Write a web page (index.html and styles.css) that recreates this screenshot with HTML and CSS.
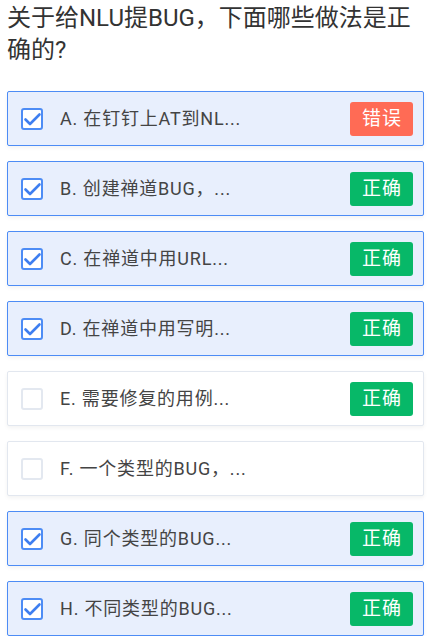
FILE: index.html
```html
<!DOCTYPE html>
<html lang="zh-CN">
<head>
<meta charset="utf-8">
<link rel="stylesheet" href="styles.css">
</head>
<body>
<div class="page">
  <h1 class="question">关于给NLU提BUG，下面哪些做法是正确的?</h1>
  <ul class="options">
    <li class="option checked">
      <span class="box"><svg viewBox="0 0 22 22" width="22" height="22"><path d="M4.5 11.5 L9 16 L18.5 6.5" fill="none" stroke="#3f7ff0" stroke-width="2.6" stroke-linecap="round" stroke-linejoin="round"/></svg></span>
      <span class="label">A. 在钉钉上AT到NL...</span>
      <span class="badge wrong">错误</span>
    </li>
    <li class="option checked">
      <span class="box"><svg viewBox="0 0 22 22" width="22" height="22"><path d="M4.5 11.5 L9 16 L18.5 6.5" fill="none" stroke="#3f7ff0" stroke-width="2.6" stroke-linecap="round" stroke-linejoin="round"/></svg></span>
      <span class="label">B. 创建禅道BUG，...</span>
      <span class="badge right">正确</span>
    </li>
    <li class="option checked">
      <span class="box"><svg viewBox="0 0 22 22" width="22" height="22"><path d="M4.5 11.5 L9 16 L18.5 6.5" fill="none" stroke="#3f7ff0" stroke-width="2.6" stroke-linecap="round" stroke-linejoin="round"/></svg></span>
      <span class="label">C. 在禅道中用URL...</span>
      <span class="badge right">正确</span>
    </li>
    <li class="option checked">
      <span class="box"><svg viewBox="0 0 22 22" width="22" height="22"><path d="M4.5 11.5 L9 16 L18.5 6.5" fill="none" stroke="#3f7ff0" stroke-width="2.6" stroke-linecap="round" stroke-linejoin="round"/></svg></span>
      <span class="label">D. 在禅道中用写明...</span>
      <span class="badge right">正确</span>
    </li>
    <li class="option">
      <span class="box"></span>
      <span class="label">E. 需要修复的用例...</span>
      <span class="badge right">正确</span>
    </li>
    <li class="option">
      <span class="box"></span>
      <span class="label">F. 一个类型的BUG，...</span>
    </li>
    <li class="option checked">
      <span class="box"><svg viewBox="0 0 22 22" width="22" height="22"><path d="M4.5 11.5 L9 16 L18.5 6.5" fill="none" stroke="#3f7ff0" stroke-width="2.6" stroke-linecap="round" stroke-linejoin="round"/></svg></span>
      <span class="label">G. 同个类型的BUG...</span>
      <span class="badge right">正确</span>
    </li>
    <li class="option checked">
      <span class="box"><svg viewBox="0 0 22 22" width="22" height="22"><path d="M4.5 11.5 L9 16 L18.5 6.5" fill="none" stroke="#3f7ff0" stroke-width="2.6" stroke-linecap="round" stroke-linejoin="round"/></svg></span>
      <span class="label">H. 不同类型的BUG...</span>
      <span class="badge right">正确</span>
    </li>
  </ul>
</div>
</body>
</html>
```

FILE: styles.css
```css
html, body {
  margin: 0;
  padding: 0;
  background: #ffffff;
}
body {
  font-family: Roboto, "Noto Sans CJK SC", sans-serif;
  color: #333333;
}
.page {
  padding: 2px 4px 0 7px;
}
.question {
  margin: 0;
  font-size: 24px;
  font-weight: 400;
  line-height: 32px;
  color: #333333;
}
.options {
  list-style: none;
  margin: 25px 0 0;
  padding: 0;
  display: flex;
  flex-direction: column;
  gap: 15px;
}
.option {
  box-sizing: border-box;
  height: 55px;
  display: flex;
  align-items: center;
  padding: 0 10px 0 13px;
  border: 1px solid #e2e7ef;
  border-radius: 2px;
  background: #ffffff;
  box-shadow: 0 2px 4px rgba(0, 0, 0, 0.05);
}
.option.checked {
  background: #e8effd;
  border-color: #4d8cf5;
}
.box {
  box-sizing: border-box;
  width: 22px;
  height: 22px;
  flex: none;
  border: 2px solid #e3e8f0;
  border-radius: 3px;
  background: #ffffff;
  position: relative;
}
.option.checked .box {
  border-color: #4d8cf5;
  background: #ffffff;
}
.box svg {
  position: absolute;
  left: -2px;
  top: -2px;
}
.label {
  flex: 1;
  margin-left: 17px;
  font-size: 18px;
  line-height: 24px;
  letter-spacing: 0.8px;
  color: #444444;
  white-space: nowrap;
}
.badge {
  box-sizing: border-box;
  flex: none;
  width: 63px;
  height: 34px;
  line-height: 34px;
  padding-left: 1px;
  text-align: center;
  border-radius: 3px;
  font-size: 19px;
  letter-spacing: 1px;
  color: #ffffff;
}
.badge.wrong {
  background: #ff6b55;
}
.badge.right {
  background: #07b868;
}
```
